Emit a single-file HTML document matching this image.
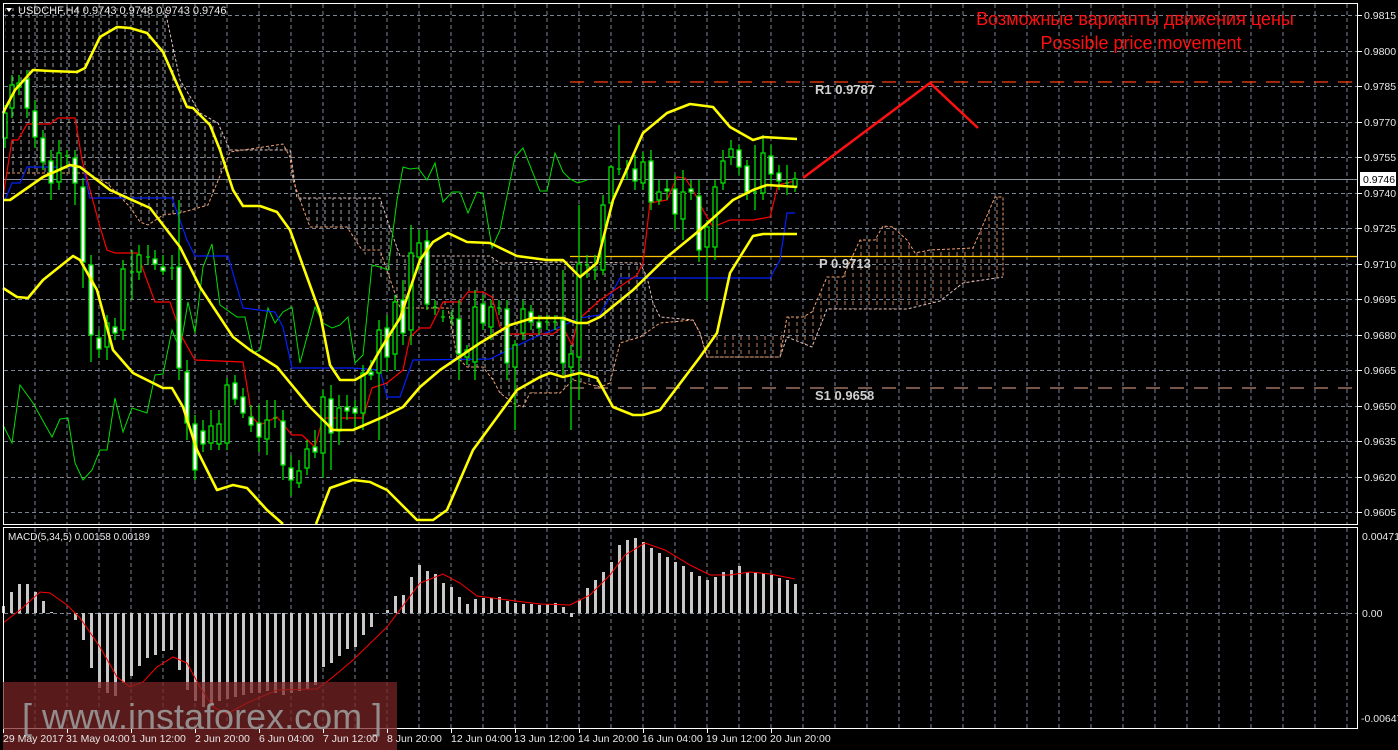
<!DOCTYPE html>
<html><head><meta charset="utf-8"><style>
html,body{margin:0;padding:0;background:#000;width:1398px;height:750px;overflow:hidden}
svg{display:block}
text{font-family:"Liberation Sans",sans-serif}
</style></head><body>
<svg width="1398" height="750" viewBox="0 0 1398 750" xmlns="http://www.w3.org/2000/svg">
<defs>
<pattern id="hw" width="8" height="7" patternUnits="userSpaceOnUse" x="1" y="0"><line x1="4" y1="0" x2="4" y2="4" stroke="#d8d8d8" stroke-opacity="0.75" stroke-width="1"/></pattern>
<pattern id="ho" width="8" height="7" patternUnits="userSpaceOnUse" x="1" y="0"><line x1="4" y1="0" x2="4" y2="4" stroke="#e8a070" stroke-opacity="0.8" stroke-width="1"/></pattern>
</defs>
<rect width="1398" height="750" fill="#000"/>
<g stroke="#7b8494" stroke-width="1" stroke-dasharray="4,3">
<path d="M35 4V524M67 4V524M99 4V524M131 4V524M163 4V524M195 4V524M227 4V524M259 4V524M291 4V524M323 4V524M355 4V524M387 4V524M419 4V524M451 4V524M483 4V524M515 4V524M547 4V524M579 4V524M611 4V524M643 4V524M675 4V524M707 4V524M739 4V524M771 4V524M803 4V524M835 4V524M867 4V524M899 4V524M931 4V524M963 4V524M995 4V524M1027 4V524M1059 4V524M1091 4V524M1123 4V524M1155 4V524M1187 4V524M1219 4V524M1251 4V524M1283 4V524M1315 4V524M1347 4V524"/>
<path d="M4 15.5H1358M4 51.5H1358M4 86.5H1358M4 122.5H1358M4 157.5H1358M4 193.5H1358M4 228.5H1358M4 264.5H1358M4 299.5H1358M4 335.5H1358M4 370.5H1358M4 406.5H1358M4 441.5H1358M4 477.5H1358M4 512.5H1358"/>
<path d="M35 528V729M67 528V729M99 528V729M131 528V729M163 528V729M195 528V729M227 528V729M259 528V729M291 528V729M323 528V729M355 528V729M387 528V729M419 528V729M451 528V729M483 528V729M515 528V729M547 528V729M579 528V729M611 528V729M643 528V729M675 528V729M707 528V729M739 528V729M771 528V729M803 528V729M835 528V729M867 528V729M899 528V729M931 528V729M963 528V729M995 528V729M1027 528V729M1059 528V729M1091 528V729M1123 528V729M1155 528V729M1187 528V729M1219 528V729M1251 528V729M1283 528V729M1315 528V729M1347 528V729"/>
<path d="M4 613.5H1358"/>
</g>
<polygon fill="url(#hw)" points="5,8 165,8 180,80 200,113 218,123 230,150 290,150 297,198 380,198 390,228 400,256 490,256 500,263 563,262 640,263 647,277 653,303 660,317 660,323 640,337 620,343 610,383 600,387 573,380 560,393 530,393 523,407 513,403 500,393 493,380 483,367 467,367 457,357 448,308 400,308 362,250 347,227 310,227 300,200 293,180 290,157 283,144 230,152 217,183 208,205 180,213 163,215 148,225 140,222 130,207 107,183 85,173 7,173"/>
<polyline fill="none" stroke="#e0c0c0" stroke-dasharray="3,2" points="165,10 180,80 200,113 218,123 230,150 290,150 297,198 380,198 390,228 400,256 490,256 500,263 563,262 640,263 647,277 653,303 660,317 693,320 700,333 707,357 780,357 787,337 812,347 827,309 907,309 940,301 963,283 1003,277"/>
<polyline fill="none" stroke="#f0a070" stroke-dasharray="3,2" points="7,173 85,173 107,183 130,207 140,222 148,225 163,215 180,213 208,205 217,183 230,152 283,144 290,157 293,180 300,200 310,227 347,227 362,250 380,250 400,308 448,308 457,357 467,367 483,367 493,380 500,393 513,403 523,407 530,393 560,393 573,380 600,387 610,383 620,343 640,337 660,323 693,320 700,333 707,357 780,357 787,317 803,317 812,312 827,277 843,277 860,240 875,240 883,226 893,227 907,240 915,253 930,250 973,248 995,197 1003,197 1003,277"/>
<polygon fill="url(#ho)" points="700,333 707,357 780,357 787,337 812,347 827,309 907,309 940,301 963,283 1003,277 1003,197 995,197 973,248 930,250 915,253 907,240 893,227 883,226 875,240 860,240 843,277 827,277 812,312 803,317 787,317 780,335"/>
<line x1="4" y1="179.5" x2="1358" y2="179.5" stroke="#8a929e"/>
<line x1="570" y1="82" x2="1358" y2="82" stroke="#ff4010" stroke-width="1.3" stroke-dasharray="14,10"/>
<line x1="570" y1="256.5" x2="1358" y2="256.5" stroke="#ffc400" stroke-width="1.2"/>
<line x1="570" y1="388" x2="1358" y2="388" stroke="#c08878" stroke-width="1.2" stroke-dasharray="14,10"/>
<polyline fill="none" stroke="#00e000" stroke-width="1" points="3,425 12,443 20,385 33,403 52,437 60,419 68,418 75,463 83,480 92,470 100,450 107,450 115,398 123,432 132,408 147,413 155,375 163,374 172,330 180,350 188,302 195,333 203,267 212,244 220,305 237,317 245,317 253,353 260,350 268,308 275,323 283,312 292,307 300,363 315,307 323,323 332,328 340,325 348,317 355,363 363,355 372,265 380,267 388,270 397,200 403,167 410,169 418,168 427,180 435,163 443,202 452,192 460,192 468,213 477,192 483,193 492,248 500,230 515,157 523,148 540,191 547,191 555,153 563,172 570,179 578,183 587,180"/>
<polyline fill="none" stroke="#0020ff" stroke-width="1.2" points="5,200 12,183 20,183 27,167 83,167 90,198 172,198 187,240 195,256 228,256 243,308 275,312 283,327 292,368 352,368 380,370 387,397 400,397 413,360 490,359 533,338 553,330 580,318 600,315 620,278 770,278 780,260 787,213 795,213"/>
<polyline fill="none" stroke="#ff0000" stroke-width="1.2" points="3,197 12,140 18,140 27,124 50,124 58,118 75,118 82,160 90,190 100,227 107,250 115,253 137,253 155,302 170,302 182,337 195,360 243,362 252,417 260,425 277,417 292,435 302,435 315,447 323,418 363,418 372,388 387,383 403,370 410,337 420,328 430,328 443,302 460,302 468,292 483,292 492,297 500,327 507,334 553,334 563,327 572,345 578,320 600,300 637,275 643,263 650,203 667,200 677,177 685,178 693,190 703,210 713,227 730,220 753,220 770,217 778,185 795,181"/>
<g stroke="#00e000" stroke-width="1.3">
<path d="M5 105V148M12 75V118M19 75V95M27 70V118M35 100V148M43 130V170M51 150V200M59 140V190M67 150V165M75 150V205M83 178V288M91 255V362M99 330V358M107 315V360M115 318V340M123 260V340M132 250V300M139 245V280M148 245V265M155 250V270M163 255V275M172 255V280M179 200V380M187 360V440M195 415V480M203 420V452M211 410V450M219 410V450M227 378V450M235 375V405M243 388V418M251 405V432M259 405V452M267 400V455M275 400V428M283 410V480M291 455V496M299 460V488M307 440V475M315 430V458M323 390V478M331 385V470M339 395V445M347 395V420M355 400V430M363 365V430M371 360V380M379 320V440M387 315V372M395 295V370M403 280V345M411 225V345M419 230V270M427 230V310M435 300V315M443 310V322M452 310V325M459 300V380M467 345V365M475 290V380M483 295V330M491 300V340M499 300V315M507 300V380M515 340V430M523 300V340M531 305V330M539 315V335M547 315V330M555 315V330M563 270V375M571 345V430M579 205V400M587 255V278M595 255V280M603 195V275M611 165V210M619 125V175M627 160V180M635 155V190M643 152V190M651 150V210M659 180V205M667 180V200M675 175V230M683 170V240M691 180V200M699 180V262M707 220V300M715 180V260M723 150V190M731 140V165M739 145V175M747 160V200M755 145V210M763 135V200M771 145V185M779 165V190M787 165V195M795 172V192"/>
</g>
<g stroke="#00e000" stroke-width="1.3" fill="#000">
<rect x="3" y="113" width="4" height="25"/><rect x="10" y="85" width="4" height="23"/><rect x="17" y="83" width="4" height="4"/><rect x="57" y="153" width="4" height="29"/><rect x="105" y="323" width="4" height="24"/><rect x="121" y="269" width="4" height="61"/><rect x="137" y="255" width="4" height="17"/><rect x="209" y="426" width="4" height="17"/><rect x="217" y="424" width="4" height="20"/><rect x="225" y="385" width="4" height="58"/><rect x="265" y="420" width="4" height="19"/><rect x="297" y="471" width="4" height="12"/><rect x="305" y="449" width="4" height="19"/><rect x="321" y="397" width="4" height="56"/><rect x="337" y="408" width="4" height="23"/><rect x="361" y="373" width="4" height="40"/><rect x="377" y="330" width="4" height="43"/><rect x="393" y="302" width="4" height="52"/><rect x="409" y="253" width="4" height="77"/><rect x="417" y="243" width="4" height="14"/><rect x="465" y="350" width="4" height="7"/><rect x="473" y="307" width="4" height="55"/><rect x="489" y="307" width="4" height="20"/><rect x="513" y="345" width="4" height="22"/><rect x="521" y="309" width="4" height="24"/><rect x="569" y="354" width="4" height="13"/><rect x="577" y="264" width="4" height="93"/><rect x="601" y="205" width="4" height="65"/><rect x="609" y="167" width="4" height="36"/><rect x="641" y="162" width="4" height="21"/><rect x="657" y="192" width="4" height="8"/><rect x="681" y="192" width="4" height="27"/><rect x="705" y="227" width="4" height="20"/><rect x="713" y="187" width="4" height="60"/><rect x="721" y="161" width="4" height="22"/><rect x="729" y="149" width="4" height="8"/><rect x="761" y="153" width="4" height="40"/><rect x="793" y="179" width="4" height="8"/>
</g>
<g stroke="#00e000" stroke-width="1.3" fill="#fff">
<rect x="25" y="79" width="4" height="29"/><rect x="33" y="111" width="4" height="26"/><rect x="41" y="138" width="4" height="24"/><rect x="49" y="161" width="4" height="22"/><rect x="73" y="158" width="4" height="25"/><rect x="81" y="187" width="4" height="75"/><rect x="89" y="265" width="4" height="70"/><rect x="97" y="338" width="4" height="11"/><rect x="113" y="327" width="4" height="6"/><rect x="153" y="259" width="4" height="5"/><rect x="161" y="267" width="4" height="4"/><rect x="177" y="267" width="4" height="101"/><rect x="185" y="372" width="4" height="51"/><rect x="193" y="424" width="4" height="46"/><rect x="201" y="431" width="4" height="13"/><rect x="233" y="383" width="4" height="16"/><rect x="241" y="397" width="4" height="16"/><rect x="249" y="417" width="4" height="8"/><rect x="257" y="423" width="4" height="14"/><rect x="281" y="421" width="4" height="44"/><rect x="289" y="468" width="4" height="12"/><rect x="313" y="447" width="4" height="5"/><rect x="329" y="399" width="4" height="34"/><rect x="345" y="407" width="4" height="4"/><rect x="353" y="408" width="4" height="5"/><rect x="369" y="372" width="4" height="3"/><rect x="385" y="328" width="4" height="29"/><rect x="401" y="300" width="4" height="33"/><rect x="425" y="241" width="4" height="63"/><rect x="457" y="319" width="4" height="35"/><rect x="481" y="304" width="4" height="19"/><rect x="505" y="309" width="4" height="54"/><rect x="529" y="312" width="4" height="10"/><rect x="537" y="322" width="4" height="6"/><rect x="561" y="320" width="4" height="43"/><rect x="633" y="169" width="4" height="12"/><rect x="649" y="161" width="4" height="41"/><rect x="665" y="189" width="4" height="2"/><rect x="673" y="189" width="4" height="25"/><rect x="689" y="189" width="4" height="3"/><rect x="697" y="196" width="4" height="54"/><rect x="737" y="150" width="4" height="17"/><rect x="745" y="166" width="4" height="26"/><rect x="769" y="156" width="4" height="18"/><rect x="777" y="173" width="4" height="8"/>
</g>
<g stroke="#00e000" stroke-width="1.3"><path d="M65 156H69M130 272H134M146 257H150M170 268H174M273 418H277M433 307H437M441 317H445M450 318H454M497 308H501M545 322H549M553 322H557M585 265H589M593 270H597M617 169H621M625 169H629M753 192H757M785 183H789"/></g>
<g fill="none" stroke="#ffff00" stroke-width="2.6" stroke-linejoin="round">
<polyline points="3,113 15,90 33,70 50,71 77,72 85,68 100,37 117,27 130,28 147,33 163,52 187,107 193,108 210,125 220,150 233,190 243,206 260,206 277,212 290,230 307,277 320,313 330,365 340,380 355,380 367,373 380,350 400,318 420,260 433,242 448,233 467,242 490,243 517,256 547,260 563,260 580,277 597,263 613,200 643,133 667,113 690,104 713,107 730,127 753,140 763,137 797,139"/>
<polyline points="3,200 10,200 43,177 70,165 80,167 110,190 150,208 180,247 200,287 233,337 250,350 277,367 310,407 333,430 353,430 383,417 403,407 420,387 440,370 480,343 510,325 533,318 563,318 577,323 587,323 600,317 633,290 667,257 700,230 733,200 753,190 767,185 797,187"/>
<polyline points="3,288 17,297 28,298 43,280 73,256 80,260 97,290 113,350 133,373 163,388 172,388 183,407 197,450 217,490 233,485 247,488 267,510 283,524"/>
<polyline points="316,524 330,488 353,480 370,482 387,490 397,500 417,520 433,520 447,510 473,450 517,390 540,377 550,373 563,377 580,373 597,378 613,407 633,415 643,415 660,410 700,357 717,333 730,273 753,236 763,234 797,234"/>
</g>
<polyline fill="none" stroke="#ff1010" stroke-width="2.5" points="803,178 930,83 978,128"/>
<g font-family="Liberation Mono,monospace" font-weight="bold" font-size="13" fill="#d0d0d0">
<text x="815" y="94">R1  0.9787</text>
<text x="819" y="268">P  0.9713</text>
<text x="815" y="400">S1  0.9658</text>
</g>
<text x="1135" y="25" font-size="18" fill="#ff1010" text-anchor="middle">Возможные варианты движения цены</text>
<text x="1141" y="49" font-size="18" fill="#ff1010" text-anchor="middle">Possible price movement</text>
<polygon points="6,8 12,8 9,12" fill="#fff"/>
<text x="18" y="14" font-size="11" fill="#e8e8e8">USDCHF,H4  0.9743 0.9748 0.9743 0.9746</text>
<g fill="#c8c8c8">
<rect x="2" y="606" width="3" height="7"/><rect x="10" y="592" width="3" height="21"/><rect x="18" y="584" width="3" height="29"/><rect x="26" y="584" width="3" height="29"/><rect x="34" y="592" width="3" height="21"/><rect x="42" y="601" width="3" height="12"/><rect x="50" y="612" width="3" height="1"/>
<rect x="74" y="613" width="3" height="7"/><rect x="82" y="613" width="3" height="27"/><rect x="90" y="613" width="3" height="55"/><rect x="98" y="613" width="3" height="75"/><rect x="106" y="613" width="3" height="80"/><rect x="114" y="613" width="3" height="83"/><rect x="122" y="613" width="3" height="70"/><rect x="130" y="613" width="3" height="63"/><rect x="138" y="613" width="3" height="53"/><rect x="146" y="613" width="3" height="45"/><rect x="154" y="613" width="3" height="42"/><rect x="162" y="613" width="3" height="38"/><rect x="170" y="613" width="3" height="37"/><rect x="178" y="613" width="3" height="57"/><rect x="186" y="613" width="3" height="77"/><rect x="194" y="613" width="3" height="88"/><rect x="202" y="613" width="3" height="94"/><rect x="210" y="613" width="3" height="92"/><rect x="218" y="613" width="3" height="88"/><rect x="226" y="613" width="3" height="86"/><rect x="234" y="613" width="3" height="84"/><rect x="242" y="613" width="3" height="82"/><rect x="250" y="613" width="3" height="80"/><rect x="258" y="613" width="3" height="80"/><rect x="266" y="613" width="3" height="78"/><rect x="274" y="613" width="3" height="80"/><rect x="282" y="613" width="3" height="82"/><rect x="290" y="613" width="3" height="80"/><rect x="298" y="613" width="3" height="78"/><rect x="306" y="613" width="3" height="76"/><rect x="314" y="613" width="3" height="72"/><rect x="322" y="613" width="3" height="54"/><rect x="330" y="613" width="3" height="50"/><rect x="338" y="613" width="3" height="43"/><rect x="346" y="613" width="3" height="36"/><rect x="354" y="613" width="3" height="34"/><rect x="362" y="613" width="3" height="22"/><rect x="370" y="613" width="3" height="14"/>
<rect x="386" y="610" width="3" height="3"/><rect x="394" y="596" width="3" height="17"/><rect x="402" y="595" width="3" height="18"/><rect x="410" y="577" width="3" height="36"/><rect x="418" y="565" width="3" height="48"/><rect x="426" y="571" width="3" height="42"/><rect x="434" y="574" width="3" height="39"/><rect x="442" y="583" width="3" height="30"/><rect x="450" y="587" width="3" height="26"/><rect x="458" y="597" width="3" height="16"/><rect x="466" y="604" width="3" height="9"/><rect x="474" y="599" width="3" height="14"/><rect x="482" y="598" width="3" height="15"/><rect x="490" y="598" width="3" height="15"/><rect x="498" y="597" width="3" height="16"/><rect x="506" y="601" width="3" height="12"/><rect x="514" y="603" width="3" height="10"/><rect x="522" y="604" width="3" height="9"/><rect x="530" y="604" width="3" height="9"/><rect x="538" y="605" width="3" height="8"/><rect x="546" y="604" width="3" height="9"/><rect x="554" y="603" width="3" height="10"/><rect x="562" y="607" width="3" height="6"/><rect x="570" y="613" width="3" height="4"/><rect x="578" y="600" width="3" height="13"/><rect x="586" y="588" width="3" height="25"/><rect x="594" y="580" width="3" height="33"/><rect x="602" y="572" width="3" height="41"/><rect x="610" y="562" width="3" height="51"/><rect x="618" y="545" width="3" height="68"/><rect x="626" y="540" width="3" height="73"/><rect x="634" y="538" width="3" height="75"/><rect x="642" y="542" width="3" height="71"/><rect x="650" y="548" width="3" height="65"/><rect x="658" y="553" width="3" height="60"/><rect x="666" y="557" width="3" height="56"/><rect x="674" y="562" width="3" height="51"/><rect x="682" y="566" width="3" height="47"/><rect x="690" y="572" width="3" height="41"/><rect x="698" y="576" width="3" height="37"/><rect x="706" y="580" width="3" height="33"/><rect x="714" y="577" width="3" height="36"/><rect x="722" y="572" width="3" height="41"/><rect x="730" y="570" width="3" height="43"/><rect x="738" y="566" width="3" height="47"/><rect x="746" y="572" width="3" height="41"/><rect x="754" y="572" width="3" height="41"/><rect x="762" y="573" width="3" height="40"/><rect x="770" y="575" width="3" height="38"/><rect x="778" y="578" width="3" height="35"/><rect x="786" y="580" width="3" height="33"/><rect x="794" y="584" width="3" height="29"/>
</g>
<polyline fill="none" stroke="#ff0000" stroke-width="1" points="3,623 20,610 40,592 50,593 67,605 80,618 100,647 117,677 130,687 143,682 157,667 173,657 187,663 200,687 213,707 227,714 247,703 277,690 317,689 333,677 353,660 387,627 420,583 443,574 460,583 477,596 500,599 540,604 570,605 590,595 610,575 625,555 645,543 665,550 690,565 710,575 730,575 750,572 770,574 795,579"/>
<text x="8" y="540" font-size="10" fill="#e8e8e8">MACD(5,34,5) 0.00158 0.00189</text>
<rect x="3.5" y="3.5" width="1354" height="521" fill="none" stroke="#fff" stroke-width="1"/>
<rect x="3.5" y="527.5" width="1354" height="201" fill="none" stroke="#fff" stroke-width="1"/>
<rect x="3" y="682" width="394" height="68" fill="#7a2424" fill-opacity="0.72"/>
<text x="22" y="729" font-size="36" fill="#9a9a9a" fill-opacity="0.9">[  www.instaforex.com  ]</text>
<g font-size="10.5" fill="#e8e8e8">
<text x="1364" y="19">0.9815</text><text x="1364" y="55">0.9800</text><text x="1364" y="90">0.9785</text><text x="1364" y="126">0.9770</text><text x="1364" y="161">0.9755</text><text x="1364" y="197">0.9740</text><text x="1364" y="232">0.9725</text><text x="1364" y="268">0.9710</text><text x="1364" y="303">0.9695</text><text x="1364" y="339">0.9680</text><text x="1364" y="374">0.9665</text><text x="1364" y="410">0.9650</text><text x="1364" y="445">0.9635</text><text x="1364" y="481">0.9620</text><text x="1364" y="516">0.9605</text>
<text x="1362" y="540">0.00471</text><text x="1362" y="617">0.00</text><text x="1361" y="722">-0.00647</text>
</g>
<path d="M1358 15.5h4M1358 51.5h4M1358 86.5h4M1358 122.5h4M1358 157.5h4M1358 193.5h4M1358 228.5h4M1358 264.5h4M1358 299.5h4M1358 335.5h4M1358 370.5h4M1358 406.5h4M1358 441.5h4M1358 477.5h4M1358 512.5h4" stroke="#fff"/>
<rect x="1360" y="172" width="36" height="14" fill="#fff"/>
<text x="1363" y="183" font-size="10.5" fill="#000">0.9746</text>
<g font-size="10.5" fill="#e8e8e8">
<text x="3" y="742">29 May 2017</text><text x="66" y="742">31 May 04:00</text><text x="131" y="742">1 Jun 12:00</text><text x="195" y="742">2 Jun 20:00</text><text x="259" y="742">6 Jun 04:00</text><text x="323" y="742">7 Jun 12:00</text><text x="387" y="742">8 Jun 20:00</text><text x="451" y="742">12 Jun 04:00</text><text x="514" y="742">13 Jun 12:00</text><text x="578" y="742">14 Jun 20:00</text><text x="642" y="742">16 Jun 04:00</text><text x="706" y="742">19 Jun 12:00</text><text x="770" y="742">20 Jun 20:00</text>
</g>
<path d="M3.5 729v4M67.5 729v4M131.5 729v4M195.5 729v4M259.5 729v4M323.5 729v4M387.5 729v4M451.5 729v4M515.5 729v4M579.5 729v4M643.5 729v4M707.5 729v4M771.5 729v4" stroke="#fff"/>
</svg>
</body></html>
